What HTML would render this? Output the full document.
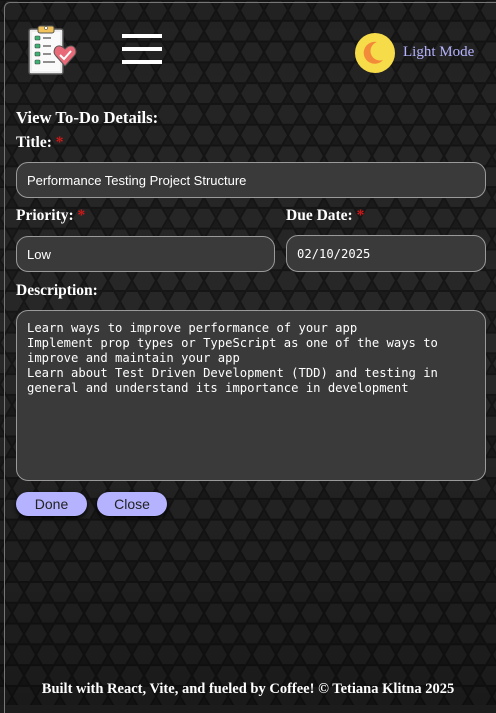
<!DOCTYPE html>
<html><head><style>
body{margin:0;width:496px;height:705px;overflow:hidden;background:#1c1c1c;font-family:"Liberation Serif",serif;color:#fff;position:relative}
#bg{position:absolute;left:0;top:0}
.frame{position:absolute;left:4px;top:2px;width:500px;height:710px;border-left:1px solid #777;border-top:1px solid #777;border-top-left-radius:6px}
.lbl{position:absolute;font-weight:bold;font-size:15.5px;left:16px}
.star{color:#d01818}
.inp{position:absolute;box-sizing:border-box;background:#3a3a3a;border:1px solid #9a9a9a;border-radius:12px;color:#fff;font-family:"Liberation Sans",sans-serif;font-size:13px;padding-left:10px;display:flex;align-items:center}
.mono{font-family:"DejaVu Sans Mono","Liberation Mono",monospace;font-size:12.2px}
.btn{position:absolute;top:492px;height:24px;background:#b5b3ff;border-radius:12px;color:#222;font-family:"Liberation Sans",sans-serif;font-size:14px;text-align:center;line-height:24px;box-shadow:0 2px 5px #000}
</style></head><body>
<svg id="bg" width="496" height="705">
<defs>
<pattern id="hx" width="24" height="41.57" patternUnits="userSpaceOnUse">
<g fill="#282828" stroke="#161616" stroke-width="2">
<polygon points="6,0 18,0 24,10.39 18,20.78 6,20.78 0,10.39" transform="translate(0,0)"/>
<polygon points="6,0 18,0 24,10.39 18,20.78 6,20.78 0,10.39" transform="translate(-12,20.78)"/>
<polygon points="6,0 18,0 24,10.39 18,20.78 6,20.78 0,10.39" transform="translate(12,20.78)"/>
<polygon points="6,0 18,0 24,10.39 18,20.78 6,20.78 0,10.39" transform="translate(0,41.57)"/>
<polygon points="6,0 18,0 24,10.39 18,20.78 6,20.78 0,10.39" transform="translate(-12,-20.78)"/>
<polygon points="6,0 18,0 24,10.39 18,20.78 6,20.78 0,10.39" transform="translate(12,-20.78)"/>
</g></pattern>
<linearGradient id="sh" x1="0" y1="0" x2="0" y2="1"><stop offset="0" stop-color="#000" stop-opacity="0.15"/><stop offset="0.5" stop-color="#000" stop-opacity="0"/><stop offset="1" stop-color="#000" stop-opacity="0.35"/></linearGradient>
</defs>
<rect width="496" height="705" fill="url(#hx)"/>
<rect width="496" height="705" fill="url(#sh)"/>
</svg>
<div class="frame"></div>
<svg style="position:absolute;left:27px;top:24px" width="52" height="52" viewBox="0 0 52 52">
<rect x="2" y="5" width="34" height="45" rx="2" fill="#eee" stroke="#555" stroke-width="1.5"/>
<rect x="5" y="8" width="28" height="39" fill="#fafafa"/>
<rect x="11" y="2" width="16" height="7" rx="2" fill="#f2c25c" stroke="#555"/>
<circle cx="19" cy="4" r="1.5" fill="#fff" stroke="#555" stroke-width=".6"/>
<g fill="#3cb371" stroke="#444" stroke-width=".6"><rect x="8" y="12" width="5" height="4" rx="1"/><rect x="8" y="20" width="5" height="4" rx="1"/><rect x="8" y="28" width="5" height="4" rx="1"/><rect x="8" y="36" width="5" height="4" rx="1"/></g>
<g stroke="#555" stroke-width="1.3"><line x1="16" y1="14" x2="24" y2="14"/><line x1="16" y1="22" x2="24" y2="22"/><line x1="16" y1="30" x2="24" y2="30"/><line x1="16" y1="38" x2="28" y2="38"/></g>
<path d="M38 42 L29 32 C25 28 28 21 33 22 C35 22 37 24 38 25 C39 24 41 22 43 22 C48 21 51 28 47 32 Z" fill="#e86a78" stroke="#555" stroke-width="1"/>
<path d="M33 31 L37 35 L44 27" fill="none" stroke="#fff" stroke-width="2"/>
</svg>
<div style="position:absolute;left:122px;top:34px;width:40px;height:4px;background:#fff"></div>
<div style="position:absolute;left:122px;top:47px;width:40px;height:4px;background:#fff"></div>
<div style="position:absolute;left:122px;top:60px;width:40px;height:4px;background:#fff"></div>
<svg style="position:absolute;left:355px;top:33px" width="40" height="40"><circle cx="20" cy="20" r="20" fill="#f7dc4a"/><path d="M22 9 A11 11 0 1 0 28 27 A9 9 0 0 1 22 9 Z" fill="#f28a3a"/></svg>
<div style="position:absolute;left:403px;top:44px;font-size:15px;color:#b5b3ff">Light Mode</div>
<div class="lbl" style="top:108px;font-size:16.7px">View To-Do Details:</div>
<div class="lbl" style="top:134px">Title: <span class="star">*</span></div>
<div class="inp" style="left:16px;top:162px;width:470px;height:36px">Performance Testing Project Structure</div>
<div class="lbl" style="top:207px">Priority: <span class="star">*</span></div>
<div class="lbl" style="top:207px;left:286px">Due Date: <span class="star">*</span></div>
<div class="inp" style="left:16px;top:236px;width:259px;height:36px">Low</div>
<div class="inp mono" style="left:286px;top:235px;width:200px;height:37px">02/10/2025</div>
<div class="lbl" style="top:282px">Description:</div>
<div class="inp mono" style="left:16px;top:310px;width:470px;height:171px;align-items:flex-start;padding-top:10px;line-height:15px;white-space:pre">Learn ways to improve performance of your app
Implement prop types or TypeScript as one of the ways to
improve and maintain your app
Learn about Test Driven Development (TDD) and testing in
general and understand its importance in development</div>
<div class="btn" style="left:16px;width:71px">Done</div>
<div class="btn" style="left:97px;width:70px">Close</div>
<div style="position:absolute;left:0;width:496px;top:681px;text-align:center;font-weight:bold;font-size:14.5px">Built with React, Vite, and fueled by Coffee! © Tetiana Klitna 2025</div>
</body></html>
